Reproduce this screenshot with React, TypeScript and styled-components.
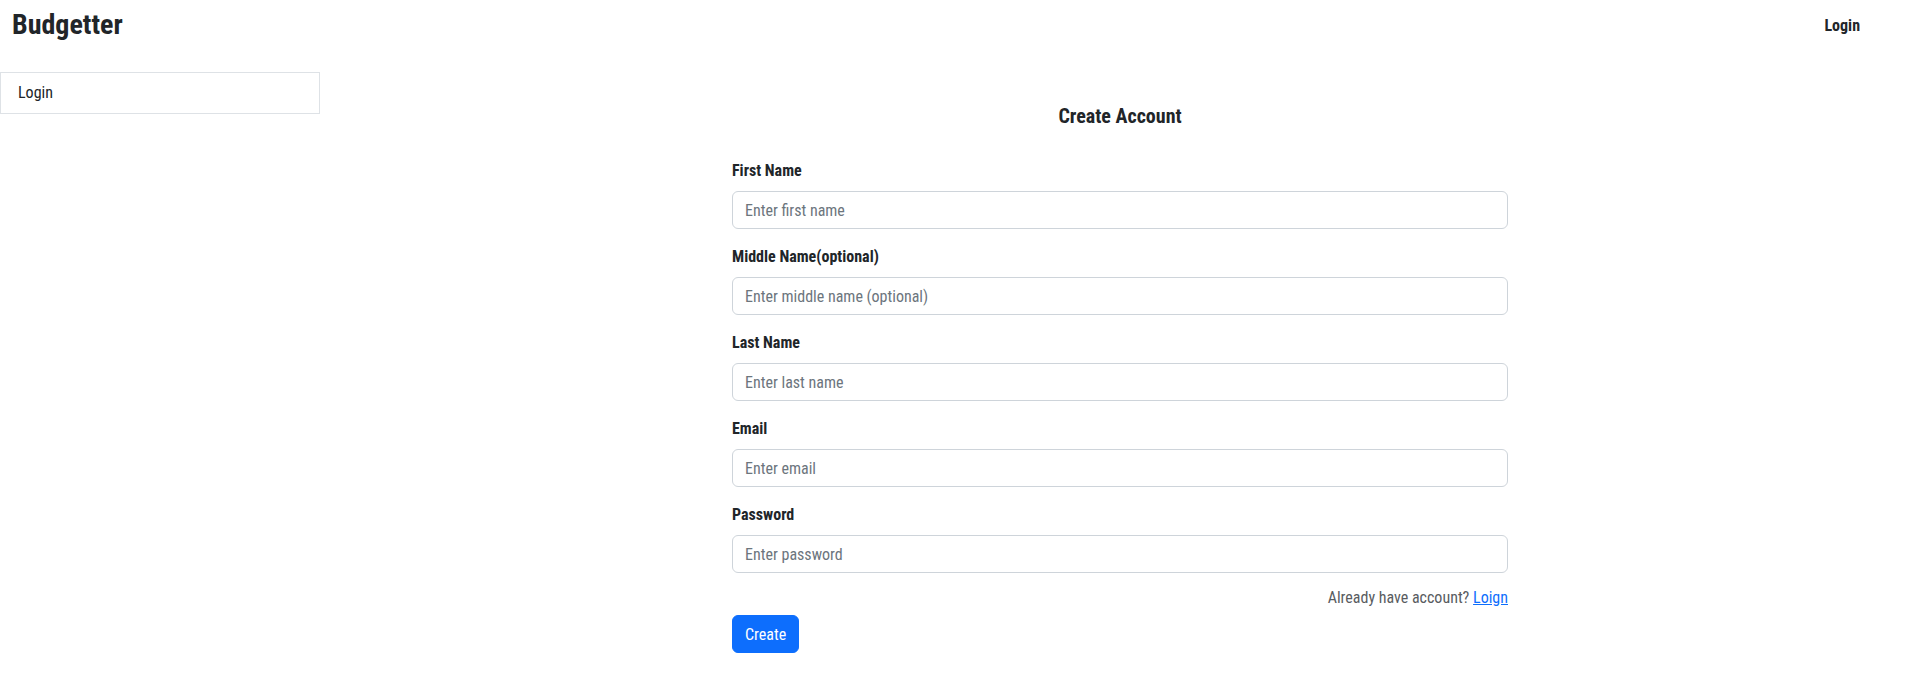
import React from "react";
import styled, { createGlobalStyle } from "styled-components";

const Global = createGlobalStyle`
  html, body { margin: 0; padding: 0; background: #fff; }
  body {
    font-family: "Roboto Condensed", "Roboto", "Liberation Sans", sans-serif;
    font-stretch: condensed;
    color: #212529;
    font-size: 16px;
    line-height: 1.5;
  }
  * { box-sizing: border-box; }
`;

const Header = styled.header`
  display: flex;
  justify-content: space-between;
  align-items: center;
  height: 50px;
  padding: 0 60px 0 12px;
`;

const Brand = styled.h1`
  margin: 0;
  font-size: 28px;
  font-weight: 700;
  line-height: 1.2;
`;

const NavLink = styled.a`
  font-size: 16px;
  font-weight: 700;
  color: #212529;
  text-decoration: none;
  padding-top: 2px;
`;

const Body = styled.div`
  display: flex;
  padding-top: 22px;
`;

const Sidebar = styled.aside`
  width: 320px;
  flex: none;
`;

const SideItem = styled.div`
  border: 1px solid #dee2e6;
  height: 42px;
  display: flex;
  align-items: center;
  padding: 0 17px;
  font-size: 16px;
`;

const Main = styled.main`
  flex: 1;
  display: flex;
  justify-content: center;
`;

const Form = styled.form`
  width: 776px;
  display: flex;
  flex-direction: column;
`;

const Title = styled.h2`
  margin: 32px 0 31px;
  text-align: center;
  font-size: 20px;
  font-weight: 700;
  line-height: 24px;
`;

const Field = styled.div<{ $tight?: boolean }>`
  display: flex;
  flex-direction: column;
  margin-bottom: ${(p) => (p.$tight ? "13px" : "16px")};
`;

const Label = styled.label`
  font-weight: 700;
  font-size: 16px;
  line-height: 24px;
  margin-bottom: 8px;
`;

const Input = styled.input`
  height: 38px;
  border: 1px solid #ced4da;
  border-radius: 6px;
  padding: 6px 12px;
  font-family: inherit;
  font-stretch: condensed;
  font-size: 16px;
  color: #212529;
  &::placeholder { color: #6c757d; }
`;

const Note = styled.p`
  margin: 0 0 5px;
  text-align: right;
  color: #595c5f;
  font-size: 16px;
  line-height: 24px;
`;

const Link = styled.a`
  color: #0d6efd;
  text-decoration: underline;
`;

const Button = styled.button`
  align-self: flex-start;
  height: 38px;
  padding: 0 12px;
  background: #0d6efd;
  color: #fff;
  border: 1px solid #0d6efd;
  border-radius: 6px;
  font-family: inherit;
  font-stretch: condensed;
  font-size: 16px;
`;

const fields = [
  { label: "First Name", ph: "Enter first name", type: "text" },
  { label: "Middle Name(optional)", ph: "Enter middle name (optional)", type: "text" },
  { label: "Last Name", ph: "Enter last name", type: "text" },
  { label: "Email", ph: "Enter email", type: "email" },
  { label: "Password", ph: "Enter password", type: "password" },
];

export default function App() {
  return (
    <>
      <Global />
      <Header>
        <Brand>Budgetter</Brand>
        <NavLink href="#">Login</NavLink>
      </Header>
      <Body>
        <Sidebar>
          <SideItem>Login</SideItem>
        </Sidebar>
        <Main>
          <Form onSubmit={(e) => e.preventDefault()}>
            <Title>Create Account</Title>
            {fields.map((f, i) => (
              <Field key={f.label} $tight={i === fields.length - 1}>
                <Label>{f.label}</Label>
                <Input type={f.type} placeholder={f.ph} />
              </Field>
            ))}
            <Note>
              Already have account? <Link href="#">Loign</Link>
            </Note>
            <Button type="submit">Create</Button>
          </Form>
        </Main>
      </Body>
    </>
  );
}
